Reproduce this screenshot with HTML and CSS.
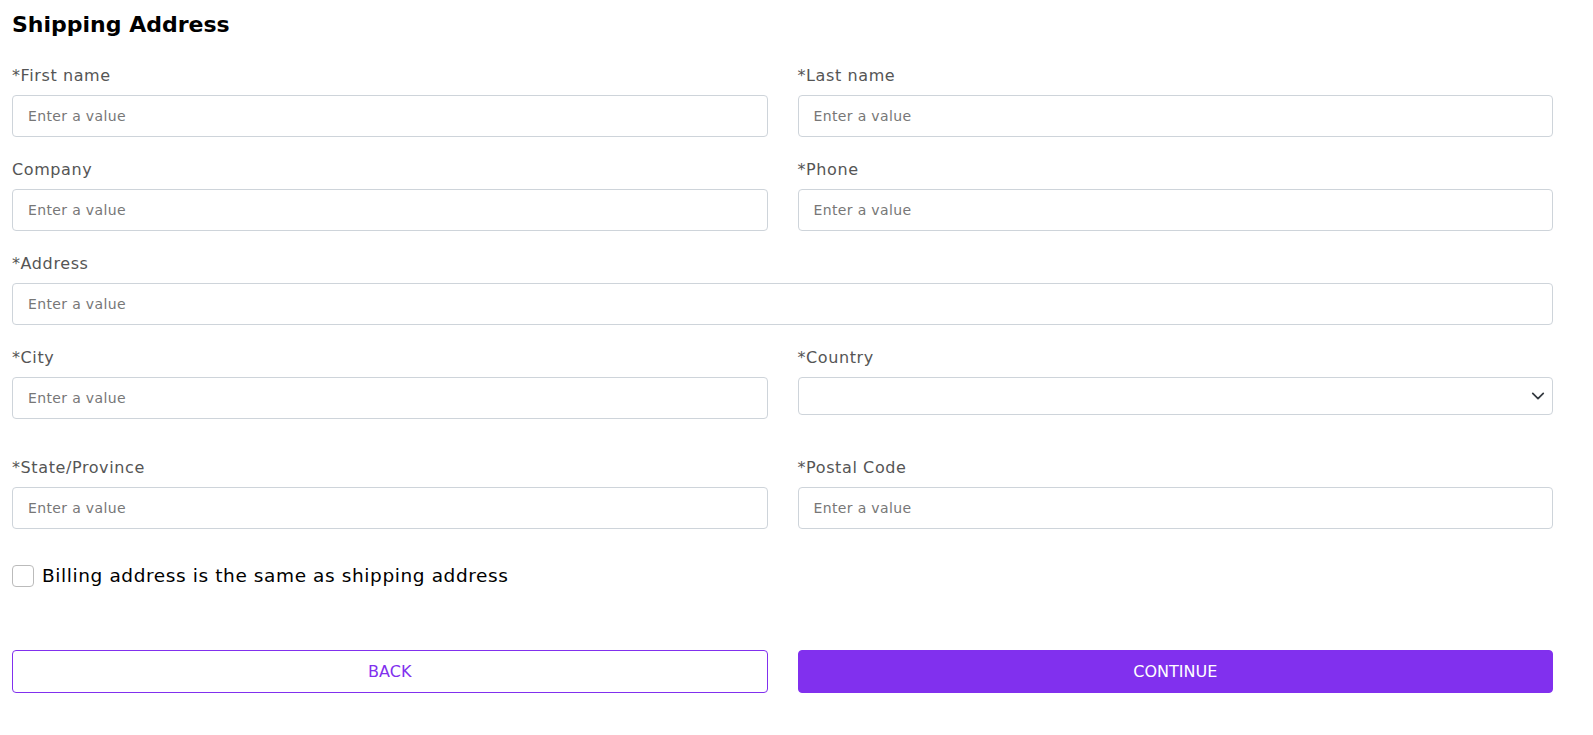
FILE: index.html
```
<!DOCTYPE html>
<html lang="en">
<head>
<meta charset="utf-8">
<title>Shipping Address</title>
<link rel="stylesheet" href="styles.css">
</head>
<body>
<form class="page">
  <h2 class="title">Shipping Address</h2>
  <div class="grid">
    <div class="field">
      <label class="label">*First name</label>
      <input class="input" type="text" placeholder="Enter a value">
    </div>
    <div class="field">
      <label class="label">*Last name</label>
      <input class="input" type="text" placeholder="Enter a value">
    </div>
    <div class="field">
      <label class="label">Company</label>
      <input class="input" type="text" placeholder="Enter a value">
    </div>
    <div class="field">
      <label class="label">*Phone</label>
      <input class="input" type="text" placeholder="Enter a value">
    </div>
    <div class="field full">
      <label class="label">*Address</label>
      <input class="input" type="text" placeholder="Enter a value">
    </div>
    <div class="field">
      <label class="label">*City</label>
      <input class="input" type="text" placeholder="Enter a value">
    </div>
    <div class="field select-field">
      <label class="label">*Country</label>
      <div class="select">
        <svg class="chevron" width="14" height="14" viewBox="0 0 16 16" fill="none" stroke="#343a40" stroke-width="2" stroke-linecap="round" stroke-linejoin="round"><path d="M2 5l6 6 6-6"/></svg>
      </div>
    </div>
    <div class="field">
      <label class="label">*State/Province</label>
      <input class="input" type="text" placeholder="Enter a value">
    </div>
    <div class="field">
      <label class="label">*Postal Code</label>
      <input class="input" type="text" placeholder="Enter a value">
    </div>
  </div>
  <label class="check">
    <span class="box"></span>
    <span class="check-text">Billing address is the same as shipping address</span>
  </label>
  <div class="actions">
    <button type="button" class="btn btn-outline">BACK</button>
    <button type="button" class="btn btn-primary">CONTINUE</button>
  </div>
</form>
</body>
</html>
```
FILE: styles.css
```
* { box-sizing: border-box; }
html, body { margin: 0; padding: 0; background: #fff; }
body {
  font-family: "DejaVu Sans", "Open Sans", sans-serif;
  color: #212529;
}
.page {
  width: 1565px;
  padding: 7px 12px 0 12px;
}
.title {
  margin: 0 0 21px 0;
  font-size: 22px;
  line-height: 36px;
  font-weight: 700;
  color: #000;
}
.grid {
  display: grid;
  grid-template-columns: 1fr 1fr;
  column-gap: 30px;
  row-gap: 21px;
}
.field { display: flex; flex-direction: column; }
.full { grid-column: 1 / 3; }
.label {
  font-size: 16px;
  line-height: 24px;
  letter-spacing: 0.6px;
  color: #555;
  margin-bottom: 7px;
}
.input {
  height: 42px;
  border: 1px solid #ced4da;
  border-radius: 4px;
  padding: 0 15px;
  font-family: inherit;
  font-size: 14px;
  letter-spacing: 0.35px;
  color: #333;
  outline: none;
}
.input::placeholder { color: #777; }
.select-field { padding-bottom: 20px; }
.select {
  height: 38px;
  border: 1px solid #ced4da;
  border-radius: 4px;
  display: flex;
  align-items: center;
  justify-content: flex-end;
  padding-right: 7px;
}
.check {
  display: flex;
  align-items: center;
  gap: 8px;
  margin-top: 35px;
}
.box {
  width: 22px;
  height: 22px;
  border: 1px solid #bbb;
  border-radius: 4px;
  background: #fff;
}
.check-text {
  font-size: 18.5px;
  line-height: 24px;
  letter-spacing: 0.6px;
  color: #000;
}
.actions {
  display: grid;
  grid-template-columns: 1fr 1fr;
  column-gap: 30px;
  margin-top: 62px;
}
.btn {
  height: 43px;
  border-radius: 4px;
  font-family: inherit;
  font-size: 16px;
  cursor: pointer;
}
.btn-outline {
  background: #fff;
  border: 1px solid #8130ee;
  color: #8130ee;
}
.btn-primary {
  background: #8130ee;
  border: 1px solid #8130ee;
  color: #fff;
}
```
